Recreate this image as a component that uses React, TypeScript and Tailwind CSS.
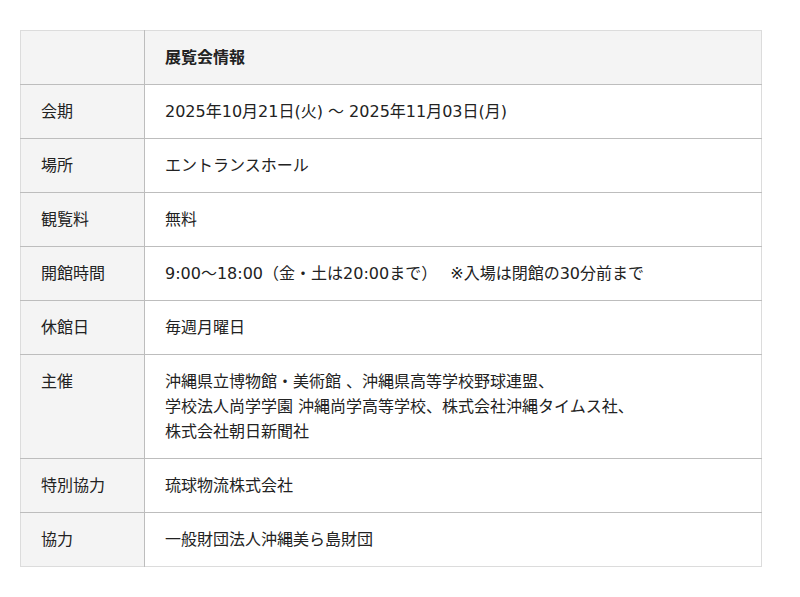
const rows: { label: string; value: string[] }[] = [
  { label: '会期', value: ['2025年10月21日(火) 〜 2025年11月03日(月)'] },
  { label: '場所', value: ['エントランスホール'] },
  { label: '観覧料', value: ['無料'] },
  { label: '開館時間', value: ['9:00〜18:00（金・土は20:00まで）\u3000 ※入場は閉館の30分前まで'] },
  { label: '休館日', value: ['毎週月曜日'] },
  {
    label: '主催',
    value: [
      '沖縄県立博物館・美術館 、沖縄県高等学校野球連盟、',
      '学校法人尚学学園 沖縄尚学高等学校、株式会社沖縄タイムス社、',
      '株式会社朝日新聞社',
    ],
  },
  { label: '特別協力', value: ['琉球物流株式会社'] },
  { label: '協力', value: ['一般財団法人沖縄美ら島財団'] },
];

export default function App() {
  return (
    <div
      className="min-h-[597px] bg-white pt-[30px] pl-[20px] text-[16px] text-[#222]"
      style={{ fontFamily: '"DejaVu Sans", "Noto Sans CJK JP", sans-serif' }}
    >
      <table className="w-[742px] table-fixed border-collapse border border-[#dcdcdc]">
        <tbody>
          {/* Header row */}
          <tr className="bg-[#f4f4f4]">
            <th className="w-[124px] border-r border-b border-[#bdbdbd] px-5 py-[14px] leading-[25px]" />
            <td className="border-b border-[#bdbdbd] px-5 py-[14px] text-left font-bold leading-[25px]">
              展覧会情報
            </td>
          </tr>
          {rows.map((row, i) => (
            <tr key={row.label}>
              <th
                className={`w-[124px] border-r border-[#bdbdbd] bg-[#f4f4f4] px-5 py-[14px] text-left align-top font-normal leading-[25px] ${
                  i < rows.length - 1 ? 'border-b' : ''
                }`}
              >
                {row.label}
              </th>
              <td
                className={`border-[#bdbdbd] px-5 py-[14px] align-top leading-[25px] ${
                  i < rows.length - 1 ? 'border-b' : ''
                }`}
              >
                {row.value.map((line) => (
                  <div key={line} className="whitespace-pre">
                    {line}
                  </div>
                ))}
              </td>
            </tr>
          ))}
        </tbody>
      </table>
    </div>
  );
}
